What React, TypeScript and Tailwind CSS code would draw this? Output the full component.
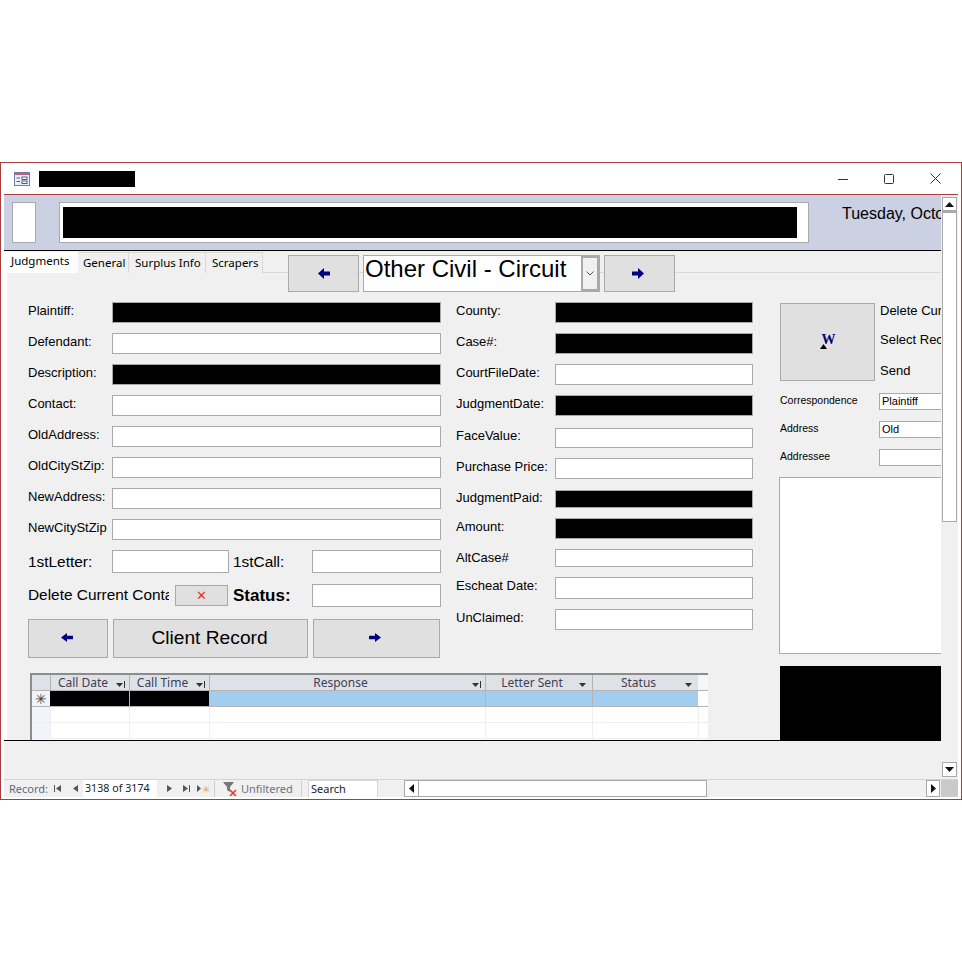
import type { ReactNode } from "react";

const arial = "font-['Liberation_Sans',Arial,sans-serif]";
const tahoma = "font-['Noto_Sans',Tahoma,sans-serif]";

function LeftArrow({ small }: { small?: boolean }) {
  return (
    <svg width="12" height={small ? 9 : 11} viewBox="0 0 12 11" preserveAspectRatio="none" className="block">
      <path d="M0 5.5 L6 0 V3.5 H12 V7.5 H6 V11 Z" fill="#000080" />
    </svg>
  );
}

function RightArrow({ small }: { small?: boolean }) {
  return (
    <svg width="12" height={small ? 9 : 11} viewBox="0 0 12 11" preserveAspectRatio="none" className="block">
      <path d="M12 5.5 L6 0 V3.5 H0 V7.5 H6 V11 Z" fill="#000080" />
    </svg>
  );
}

function NavBtn({ className, children }: { className: string; children: ReactNode }) {
  return (
    <div className={`flex items-center justify-center border border-[#a9a9a9] bg-[#e0e0e0] ${className}`}>
      {children}
    </div>
  );
}

function Field({ black }: { black?: boolean }) {
  return (
    <div className={`h-full flex-1 border border-[#a9a9a9] ${black ? "bg-black" : "bg-white"}`} />
  );
}

const leftRows = [
  { label: "Plaintiff:", black: true },
  { label: "Defendant:" },
  { label: "Description:", black: true },
  { label: "Contact:" },
  { label: "OldAddress:" },
  { label: "OldCityStZip:" },
  { label: "NewAddress:" },
  { label: "NewCityStZip" },
];

const midRows = [
  { label: "County:", black: true, cls: "h-[21px]", up: "pb-[5px]" },
  { label: "Case#:", black: true, cls: "h-[21px] mt-[10px]", up: "pb-[5px]" },
  { label: "CourtFileDate:", cls: "h-[21px] mt-[10px]", up: "pb-[5px]" },
  { label: "JudgmentDate:", black: true, cls: "h-[21px] mt-[10px]", up: "pb-[5px]" },
  { label: "FaceValue:", cls: "h-[20px] mt-[12px]", up: "pb-[5px]" },
  { label: "Purchase Price:", cls: "h-[21px] mt-[10px]", up: "pb-[5px]" },
  { label: "JudgmentPaid:", black: true, cls: "h-[18px] mt-[11px]", up: "pb-[3px]" },
  { label: "Amount:", black: true, cls: "h-[21px] mt-[10px]", up: "pb-[4px]" },
  { label: "AltCase#", cls: "h-[18px] mt-[10px]", up: "pb-[2px]" },
  { label: "Escheat Date:", cls: "h-[22px] mt-[10px]", up: "pb-[5px]" },
  { label: "UnClaimed:", cls: "h-[21px] mt-[10px]", up: "pb-[5px]" },
];

const sheetCols = [
  { name: "Call Date", w: "w-[79px]", bar: true, text: "mr-[14px]" },
  { name: "Call Time", w: "w-[80px]", bar: true, text: "mr-[14px]" },
  { name: "Response", w: "w-[276px]", bar: true, text: "mr-[14px]" },
  { name: "Letter Sent", w: "w-[107px]", text: "mr-[14px]" },
  { name: "Status", w: "w-[106px]", text: "mr-[14px]" },
];

function SheetMenu({ bar }: { bar?: boolean }) {
  return (
    <svg width="10" height="8" viewBox="0 0 10 8" className="absolute right-[3px] top-[6px]">
      <path d="M0 2 H7 L3.5 6 Z" fill="#333" />
      {bar && <rect x="8" y="0" width="1" height="7" fill="#333" />}
    </svg>
  );
}

function Datasheet() {
  return (
    <div className={`mt-[15px] ml-[2px] h-[67px] w-[678px] overflow-hidden border-t-2 border-l-2 border-[#8c8c8c] bg-white text-[12px] leading-[16px] text-[#3e3e55] ${tahoma}`}>
      <div className="flex h-[16px] border-b border-[#b4b4b4]">
        <div className="w-[18px] bg-[#dee1e6]" />
        {sheetCols.map((c) => (
          <div key={c.name} className={`relative border-l border-[#b4b4b4] bg-[#dee1e6] text-center ${c.w}`}>
            <span className={c.text}>{c.name}</span>
            <SheetMenu bar={c.bar} />
          </div>
        ))}
        <div className="flex-1 bg-[#f4f6fb]" />
      </div>
      <div className="flex h-[16px] border-b border-[#b4b4b4]">
        <div className="flex w-[18px] items-center justify-center bg-[#f2f4fb] text-[14px] text-[#444]">✳</div>
        <div className="w-[79px] bg-black" />
        <div className="w-[80px] border-l border-[#b4b4b4] bg-black" />
        <div className="w-[276px] bg-[#a3cdef]" />
        <div className="w-[107px] border-l border-[#b4b4b4] bg-[#a3cdef]" />
        <div className="w-[106px] border-l border-[#b4b4b4] bg-[#a3cdef]" />
      </div>
      {[0, 1].map((r) => (
        <div key={r} className="flex h-[16px] border-b border-[#eeeeee]">
          <div className="w-[18px] bg-[#f2f4fb]" />
          {sheetCols.map((c) => (
            <div key={c.name} className={`border-l border-[#eeeeee] ${c.w}`} />
          ))}
          <div className="flex-1 border-l border-[#eeeeee]" />
        </div>
      ))}
    </div>
  );
}

function LeftColumn() {
  return (
    <div className="w-[413px]">
      <div className="flex flex-col gap-[10px]">
        {leftRows.map((r) => (
          <div key={r.label} className="flex h-[21px] items-center">
            <div className="w-[84px] pb-[5px] text-[13px] leading-none text-black">{r.label}</div>
            <Field black={r.black} />
          </div>
        ))}
      </div>
      <div className="mt-[10px] flex h-[23px] items-center text-[15.4px]">
        <div className="w-[84px]">1stLetter:</div>
        <div className="h-full w-[117px] border border-[#a9a9a9] bg-white" />
        <div className="ml-[4px] w-[79px]">1stCall:</div>
        <Field />
      </div>
      <div className="mt-[11px] flex h-[23px] items-center">
        <div className="w-[141px] overflow-hidden pb-[2px] text-[15.4px] whitespace-nowrap">Delete Current Contact</div>
        <NavBtn className="ml-[6px] h-[21px] w-[53px]">
          <span className="text-[13px] leading-none text-[#e0392b]">✕</span>
        </NavBtn>
        <div className="ml-[5px] w-[79px] text-[17px] font-bold">Status:</div>
        <Field />
      </div>
      <div className="mt-[12px] flex h-[39px]">
        <NavBtn className="w-[80px] pr-[2px] pb-[3px]"><LeftArrow small /></NavBtn>
        <NavBtn className="ml-[5px] w-[195px] pr-[2px] pb-px text-[19.2px]">Client Record</NavBtn>
        <NavBtn className="ml-[5px] w-[127px] pr-[3px] pb-[3px]"><RightArrow small /></NavBtn>
      </div>
    </div>
  );
}

function MiddleColumn() {
  return (
    <div className="ml-[15px] w-[297px]">
      {midRows.map((r) => (
        <div key={r.label} className={`flex items-center ${r.cls}`}>
          <div className={`w-[99px] text-[13px] leading-none ${r.up}`}>{r.label}</div>
          <Field black={r.black} />
        </div>
      ))}
    </div>
  );
}

function SideRow({ label, value, cls }: { label: string; value: string; cls: string }) {
  return (
    <div className={`flex h-[17px] shrink-0 items-center ${cls}`}>
      <div className="w-[100px] shrink-0 pb-[3px] pl-px text-[10.5px] leading-none">{label}</div>
      <div className="h-[17px] w-[80px] shrink-0 border border-[#a9a9a9] bg-white pl-[2px] text-[11px] leading-[15px]">{value}</div>
    </div>
  );
}

function RightColumn() {
  return (
    <div className="ml-[26px] flex w-[190px] shrink-0 flex-col pt-[30px]">
      <div className="flex h-[78px]">
        <div className="ml-px flex w-[95px] items-center justify-center border border-[#a9a9a9] bg-[#e0e0e0]">
          <div className="relative h-[14px] w-[16px]">
            <span className="absolute top-[-1px] left-[2px] font-['Liberation_Serif',serif] text-[14px] leading-[11px] font-bold text-[#000080]">W</span>
            <svg width="7" height="5" viewBox="0 0 7 5" className="absolute top-[9px] left-0">
              <path d="M3.5 0 L7 5 H0 Z" fill="#000" />
            </svg>
          </div>
        </div>
        <div className="ml-[5px] flex flex-col text-[13px] leading-[17px] whitespace-nowrap">
          <div className="-mt-px">Delete Current</div>
          <div className="mt-[12px]">Select Record</div>
          <div className="mt-[14px]">Send</div>
        </div>
      </div>
      <SideRow label="Correspondence" value="Plaintiff" cls="mt-[12px]" />
      <SideRow label="Address" value="Old" cls="mt-[11px]" />
      <SideRow label="Addressee" value="" cls="mt-[11px]" />
      <div className="mt-[11px] h-[177px] w-[190px] shrink-0 border border-[#a9a9a9] bg-white" />
      <div className="mt-[12px] ml-px h-[74px] w-[190px] shrink-0 bg-black" />
    </div>
  );
}

function Scrollbar() {
  return (
    <div className="flex w-[17px] shrink-0 flex-col bg-[#f0f0f0] pt-[2px] pr-px pb-[2px] pl-px">
      <div className="flex h-[15px] items-center justify-center border border-b-2 border-[#a9a9a9] bg-white">
        <svg width="9" height="5" viewBox="0 0 9 5"><path d="M4.5 0 L9 5 H0 Z" fill="#111" /></svg>
      </div>
      <div className="h-[310px] border border-[#a9a9a9] bg-white" />
      <div className="flex-1" />
      <div className="flex h-[15px] items-center justify-center border border-[#a9a9a9] bg-white">
        <svg width="9" height="5" viewBox="0 0 9 5"><path d="M4.5 5 L9 0 H0 Z" fill="#111" /></svg>
      </div>
    </div>
  );
}

function RecordNav({ d }: { d: string }) {
  return (
    <svg width="9" height="9" viewBox="0 0 9 9" className="shrink-0">
      <path d={d} fill="#555" />
    </svg>
  );
}

function RecordBar() {
  return (
    <div className={`flex h-[18px] items-stretch border-t border-[#d4d4d4] bg-[#f0f0f0] text-[11px] leading-[17px] ${tahoma}`}>
      <div className="flex w-[211px] items-center border-r border-[#cfcfcf]">
        <span className="ml-[5px] w-[44px] text-[#5b6b80]">Record:</span>
        <RecordNav d="M1 1 H2 V8 H1 Z M8 1 V8 L3 4.5 Z" />
        <span className="w-[9px]" />
        <RecordNav d="M7 1 V8 L2 4.5 Z" />
        <div className="ml-[3px] h-full w-[74px] bg-white pl-[2px] text-[10.7px] text-[#222]">3138 of 3174</div>
        <span className="w-[8px]" />
        <RecordNav d="M2 1 V8 L7 4.5 Z" />
        <span className="w-[8px]" />
        <RecordNav d="M1 1 V8 L6 4.5 Z M7 1 H8 V8 H7 Z" />
        <span className="w-[5px]" />
        <RecordNav d="M1 1 V8 L5 4.5 Z" />
        <span className="-ml-[3px] text-[10px] leading-none text-[#e9a84a]">✳</span>
      </div>
      <div className="flex w-[87px] items-center border-r border-[#cfcfcf] pl-[8px] text-[#6a7486]">
        <svg width="16" height="14" viewBox="0 0 16 14" className="shrink-0">
          <path d="M0 0 H11 L7 5 V10 L4 8 V5 Z" fill="#777" />
          <path d="M7 8 L13 14 M13 8 L7 14" stroke="#d8402a" strokeWidth="1.6" />
        </svg>
        <span className="ml-[2px]">Unfiltered</span>
      </div>
      <div className="ml-[6px] h-full w-[70px] border-t border-r border-l border-[#d4d4d4] bg-white pl-[2px] leading-[16px] text-[#222]">Search</div>
      <div className="w-[26px]" />
      <div className="flex w-[15px] items-center justify-center border border-[#a9a9a9] bg-white">
        <svg width="5" height="9" viewBox="0 0 5 9"><path d="M0 4.5 L5 0 V9 Z" fill="#111" /></svg>
      </div>
      <div className="w-[288px] border-y border-r border-[#a9a9a9] bg-white" />
      <div className="w-[219px]" />
      <div className="flex w-[14px] items-center justify-center border border-[#a9a9a9] bg-white">
        <svg width="5" height="9" viewBox="0 0 5 9"><path d="M5 4.5 L0 0 V9 Z" fill="#111" /></svg>
      </div>
      <div className="w-px" />
      <div className="w-[17px] bg-[#c9c9c9]" />
    </div>
  );
}

export default function App() {
  return (
    <div className={`h-[962px] w-[962px] overflow-hidden bg-white pt-[162px] text-black ${arial}`}>
      <div className="flex h-[638px] flex-col border border-[#a93c3f] bg-white px-[3px] pb-[2px]">
        <div className="-mx-[3px] flex h-[31px] shrink-0 items-center">
          <svg width="16" height="16" viewBox="0 0 16 16" className="ml-[13px] shrink-0">
            <rect x="0.5" y="1.5" width="15" height="13" fill="#e9f0fa" stroke="#6f7fa6" />
            <rect x="1" y="2" width="14" height="2" fill="#c95a78" />
            <path d="M2.5 7 H6 M2.5 10.5 H6" stroke="#44608e" />
            <rect x="8" y="6" width="5" height="2.5" fill="#fff" stroke="#44608e" />
            <rect x="8" y="10" width="5" height="2.5" fill="#fff" stroke="#44608e" />
          </svg>
          <div className="ml-[9px] h-[16px] w-[96px] bg-black" />
          <div className="flex-1" />
          <svg width="10" height="10" viewBox="0 0 10 10" className="mr-[36px]"><path d="M0 5.5 H10" stroke="#333" /></svg>
          <svg width="10" height="10" viewBox="0 0 10 10" className="mr-[36px]"><rect x="0.5" y="0.5" width="9" height="9" rx="1" fill="none" stroke="#333" /></svg>
          <svg width="11" height="11" viewBox="0 0 11 11" className="mr-[20px]"><path d="M0.5 0.5 L10.5 10.5 M10.5 0.5 L0.5 10.5" stroke="#333" /></svg>
        </div>

        <div className="flex h-[585px] shrink-0 border-t border-[#a93c3f]">
          <div className="w-[937px] shrink-0 overflow-hidden">
            <div className="flex h-[56px] border-b border-black bg-[#cbd0e2]">
              <div className="mt-[7px] ml-[8px] h-[41px] w-[24px] border border-[#a9a9a9] bg-white" />
              <div className="mt-[7px] ml-[23px] h-[41px] w-[750px] border border-[#a9a9a9] bg-white pt-[4px] pl-[3px]">
                <div className="h-[31px] w-[734px] bg-black" />
              </div>
              <div className="mt-[10px] ml-[33px] w-[99px] overflow-hidden text-[16px] leading-[18px] whitespace-nowrap">Tuesday, October</div>
            </div>

            <div className="relative z-10 flex h-[21px] items-start bg-[#f0f0f0]">
              <div className={`mt-px flex h-[21px] text-[11.5px] ${tahoma}`}>
                <div className="w-[74px] bg-white pl-[7px] leading-[18px]">Judgments</div>
                <div className="w-[51px] border-t border-r border-[#d8d8d8] bg-[#f0f0f0] pl-[5px] leading-[20px]">General</div>
                <div className="w-[77px] border-t border-r border-[#d8d8d8] bg-[#f0f0f0] pl-[6px] leading-[20px]">Surplus Info</div>
                <div className="w-[57px] border-t border-r border-[#d8d8d8] bg-[#f0f0f0] pl-[6px] leading-[20px]">Scrapers</div>
              </div>
              <NavBtn className="mt-[4px] ml-[25px] h-[37px] w-[71px] shrink-0 pb-px"><LeftArrow /></NavBtn>
              <div className="mt-[4px] ml-[4px] flex h-[37px] w-[237px] shrink-0 border border-[#a9a9a9] bg-white">
                <div className="flex-1 pl-px text-[24px] leading-[26px] whitespace-nowrap">Other Civil - Circuit</div>
                <div className="flex w-[18px] items-center justify-center border-2 border-[#a9a9a9] bg-[#f0f0f0]">
                  <svg width="8" height="5" viewBox="0 0 8 5"><path d="M0.5 0.5 L4 4 L7.5 0.5" fill="none" stroke="#555" /></svg>
                </div>
              </div>
              <NavBtn className="mt-[4px] ml-[4px] h-[37px] w-[71px] shrink-0 pr-[3px] pb-px"><RightArrow /></NavBtn>
            </div>

            <div className="flex h-[469px] border-b border-black bg-white">
              <div className="ml-[3px] flex flex-1 overflow-hidden border-t border-[#d8d8d8] bg-[#f0f0f0] pl-[21px]">
                <div className="w-[725px] shrink-0 pt-[29px]">
                  <div className="flex items-start">
                    <LeftColumn />
                    <MiddleColumn />
                  </div>
                  <Datasheet />
                </div>
                <RightColumn />
              </div>
            </div>

            <div className="h-[38px] bg-[#f0f0f0]" />
          </div>
          <Scrollbar />
        </div>

        <RecordBar />
      </div>
    </div>
  );
}
